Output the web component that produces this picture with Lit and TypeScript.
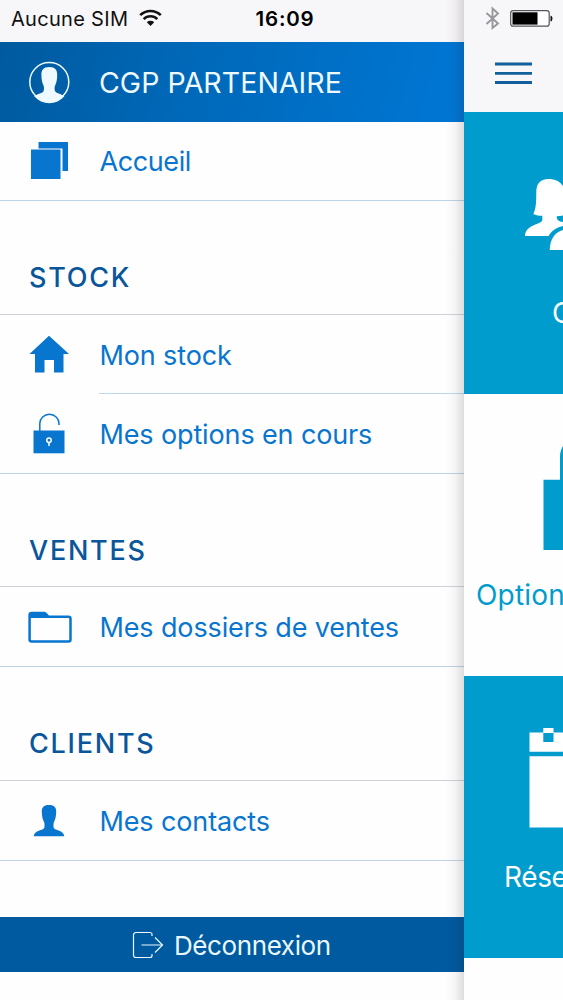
import { LitElement, html, css, svg } from "lit";
import { customElement } from "lit/decorators.js";

// Row icons share a 99x79 cell that spans the left gutter of the menu.
const icons: Record<string, unknown> = {
  home: svg`<path d="M38.5 20H68v29H62.5V26.5H38.5z"/><path d="M31 27.5H60.5V57H31z"/>`,
  house: svg`<path d="M49 20.8 69 39H63.500V57.500H54V45H44.500V57.500H35V39H29.500z"/>`,
  lock: svg`<path d="M39.800 37V29.500a9.600 9.300 0 0 1 19.200 0V31" fill="none" stroke="currentColor" stroke-width="1.500"/>
    <path d="M33.500 36.500H64.500V59.300H33.500z"/><circle cx="49" cy="46.300" r="2.200" fill="none" stroke="#fff" stroke-width="1.500"/>
    <path d="M49 48V52" stroke="#fff" stroke-width="1.500"/>`,
  folder: svg`<path d="M29.600 28V52.500a2 2 0 0 0 2 2H68.500a2 2 0 0 0 2-2V31.800a2 2 0 0 0-2-2H48.500L45.500 26.500a2 2 0 0 0-1.500-.6H31.600a2 2 0 0 0-2 2z" fill="none" stroke="currentColor" stroke-width="2.500"/>
    <path d="M29 26H45L48.500 31H29z"/>`,
  contact: svg`<path d="M49 24c-5.500 0-7.400 2.700-7.200 7 .1 4.500.9 7.500 2.200 10 .7 1.500.7 4.500.2 6-.8 2.500-10 2-10.500 8.300H64.300c-.5-6.300-9.700-5.800-10.500-8.300-.5-1.500-.5-4.500.2-6 1.300-2.500 2.100-5.500 2.200-10 .2-4.300-1.700-7-7.200-7z"/>`,
};

@customElement("app-root")
export class AppRoot extends LitElement {
  static styles = css`
    :host { display: block; height: 1000px; overflow: hidden; font-family: Inter, sans-serif; color: #0875cf; background: #fefefe; }
    .screen { display: flex; width: 563px; height: 1000px; overflow: hidden; }
    .drawer { width: 464px; flex: none; display: flex; flex-direction: column; position: relative; }
    .drawer::after { content: ""; position: absolute; top: 0; right: 0; bottom: 0; width: 18px;
      background: linear-gradient(90deg, rgba(30,15,25,0), rgba(30,15,25,.04) 50%, rgba(30,15,25,.14)); }
    svg { display: block; flex: none; fill: currentColor; }
    .status { height: 42px; flex: none; box-sizing: border-box; background: #f7f6f9; color: #111; display: flex; align-items: center; padding: 0 0 5px 11px; font-size: 20px; }
    .carrier { width: 128px; letter-spacing: .3px; white-space: nowrap; }
    .status svg { margin-top: -2px; }
    .time { margin-left: 92.500px; font-weight: 600; font-size: 20.500px; letter-spacing: .8px; color: #000; }
    .profile { height: 80px; flex: none; display: flex; align-items: center; color: #eefaff; background: linear-gradient(105deg, #005a9e, #0068b8 40%, #0077d5); font-size: 28.500px; }
    .profile .label { letter-spacing: .05px; padding-top: 1px; font-weight: 400; }
    .row { height: 79px; flex: none; box-sizing: border-box; display: flex; font-size: 27px; font-weight: 400; }
    .row .label { flex: 1; display: flex; align-items: center; padding: 2px 0 0 .5px; border-bottom: 1px solid #bdd8eb; letter-spacing: -.13px; white-space: nowrap; }
    .row.full { border-bottom: 1px solid #bdd5e6; height: 80px; }
    .row.full .label { border: 0; }
    .row.first { height: 79px; }
    .row.first .label { padding-top: 0; letter-spacing: -.4px; }
    h2 { margin: 0; height: 113px; flex: none; box-sizing: border-box; padding: 59px 0 0 29px; border-bottom: 1px solid #cfd2d9; font-size: 27px; line-height: 36px; font-weight: 500; letter-spacing: 1.750px; color: #0a569a; }
    h2.tall { height: 114px; }
    .logout { margin-top: 56px; height: 55px; display: flex; align-items: center; background: #005a9f; color: #e9f8ff; font-size: 26px; font-weight: 400; letter-spacing: -.4px; padding-left: 132px; gap: 10px; }
    .logout span { padding-top: 2px; }
    .page { width: 99px; flex: none; overflow: hidden; display: flex; flex-direction: column; color: #009ccd; }
    .bar { height: 112px; flex: none; background: #f7f6f9; }
    .tile { height: 282px; flex: none; position: relative; box-sizing: border-box; white-space: nowrap; font-size: 28px; line-height: 35px; overflow: hidden; }
    .tile svg { height: 184px; }
    .blue { background: #009ccd; color: #fff; }
    .clients { padding-left: 88px; }
    .clients svg { margin-left: -88px; }
    .options { padding-left: 12px; letter-spacing: .2px; font-weight: 400; }
    .options svg { margin-left: -12px; }
    .reserve { padding-left: 40px; }
    .reserve svg { margin-left: -40px; }
    .light { font-weight: 400; letter-spacing: -.4px; }
  `;

  private row(icon: string, label: string, kind = "") {
    return html`<div class="row ${kind}"><svg width="99" height="79" viewBox="0 0 99 79">${icons[icon]}</svg><span class="label">${label}</span></div>`;
  }

  render() {
    return html`<div class="screen">
      <nav class="drawer">
        <div class="status">
          <span class="carrier">Aucune SIM</span>
          <svg width="24" height="20" viewBox="0 0 24 20"><g fill="none" stroke="#111" stroke-width="2.5"><path d="M1.200 7.200a14.500 14.500 0 0 1 20.600 0"/><path d="M4.700 11.200a9.500 9.500 0 0 1 13.600 0"/></g><path d="M7.800 14.200a5.500 5.500 0 0 1 7.400 0L11.500 18z"/></svg>
          <span class="time">16:09</span>
        </div>
        <div class="profile">
          <svg width="99" height="80" viewBox="0 0 99 80"><circle cx="49.300" cy="40" r="19.500" fill="none" stroke="currentColor" stroke-width="1.500"/><path d="M49.300 25c-6 0-8 3-7.900 8 .1 5 .9 8 2.100 10.500.7 1.500.6 4 .1 5.500-.8 2.500-6 2.500-9.400 5.300A20 20 0 0 0 64.400 54.300c-3.400-2.800-8.600-2.800-9.400-5.300-.5-1.500-.6-4 .1-5.500 1.200-2.500 2-5.500 2.100-10.500.1-5-1.900-8-7.900-8z"/></svg>
          <span class="label">CGP PARTENAIRE</span>
        </div>
        ${this.row("home", "Accueil", "full first")}
        <h2 class="tall">STOCK</h2>
        ${this.row("house", "Mon stock")}
        ${this.row("lock", "Mes options en cours", "full")}
        <h2>VENTES</h2>
        ${this.row("folder", "Mes dossiers de ventes", "full")}
        <h2 class="tall">CLIENTS</h2>
        ${this.row("contact", "Mes contacts", "full")}
        <div class="logout">
          <svg width="32" height="28" viewBox="0 0 32 28" fill="none"><g fill="none" stroke="currentColor" stroke-width="1.200"><path d="M20 5V3.500a2 2 0 0 0-2-2H4a2.500 2.500 0 0 0-2.500 2.500V24a2.500 2.500 0 0 0 2.500 2.500H18a2 2 0 0 0 2-2V23M9.500 14H30M23 6.500 30.500 14 23 21.500"/></g></svg>
          <span>Déconnexion</span>
        </div>
      </nav>
      <main class="page">
        <div class="bar"><svg width="99" height="112" viewBox="0 0 99 112">
          <path d="M22.500 13 34 23.500 28.500 28V8.500L34 13.500 22.500 24" fill="none" stroke="#98979c" stroke-width="1.900"/>
          <rect x="46.700" y="10.700" width="38.500" height="15.500" rx="2.500" fill="#fff" stroke="#55545a" stroke-width="1.200"/><rect x="48.500" y="12.300" width="25" height="12.300" fill="#000"/><path d="M86.500 15.500q2 .5 2 3t-2 3z" fill="#111"/>
          <path d="M31 64H68M31 73.300H68M31 82.500H68" stroke="#135f9c" stroke-width="2.800"/></svg></div>
        <section class="tile blue clients"><svg width="99" viewBox="0 0 99 184">
          <path d="M84.500 67C76 67 72.300 72 72.300 80C72.300 90 72 97 69.300 102C72 103.300 75 103.800 78.300 103.800V108C78.300 112.500 61.500 112 61 124H84.500C87.500 119 92 115.500 99 114V110C95 109.500 92.700 108.500 92.700 104.300Q96 104.300 99 103.500V74C96 69.500 91 67 84.500 67z"/><path d="M85.700 138C86 127 91 120 99 118V138z"/></svg><span class="light">Clients</span></section>
        <section class="tile options"><svg width="99" viewBox="0 0 99 184"><path d="M79.500 85.700H96V63q0-6.500 3-11V156H79.500z"/></svg><span>Options</span></section>
        <section class="tile blue reserve"><svg width="99" viewBox="0 0 99 184"><path d="M65.500 56.500H79.300V52H89.500V56.500H99V75.700H65.500z"/><path d="M79.300 57H89.500V66H79.300z" fill="#009ccd"/><path d="M65.500 80.300H99V151.500H65.500z"/></svg><span class="light">Réservations</span></section>
      </main>
    </div>`;
  }
}
